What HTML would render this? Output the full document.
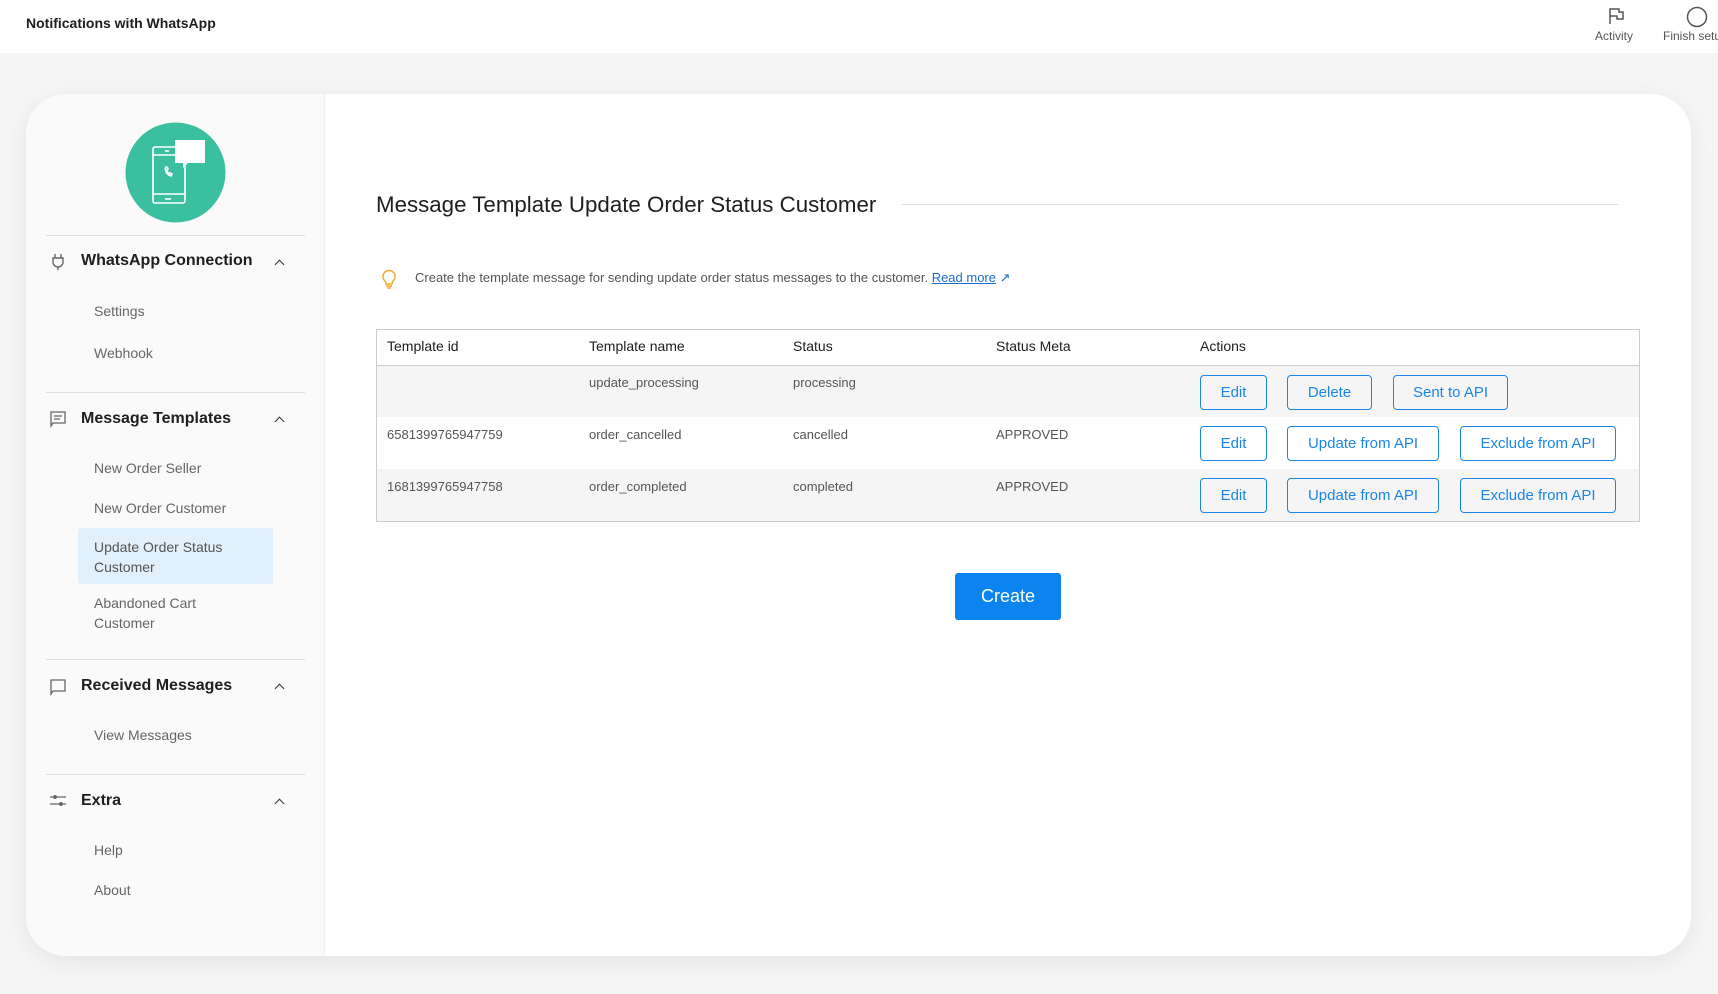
<!DOCTYPE html>
<html><head><style>
*{margin:0;padding:0;box-sizing:border-box}
body{width:1718px;height:994px;background:#f5f5f5;font-family:"Liberation Sans",sans-serif;position:relative;overflow:hidden;color:#1e1e1e}
.a{position:absolute;white-space:nowrap}
.hdr{position:absolute;left:0;top:0;width:1718px;height:53px;background:#fff}
.card{position:absolute;left:26px;top:94px;width:1665px;height:862px;background:#fff;border-radius:40px;box-shadow:0 6px 24px rgba(0,0,0,.07);overflow:hidden}
.side{position:absolute;left:0;top:0;width:299px;height:862px;background:#fafafa;border-right:1px solid #eee}
.div{position:absolute;left:46px;width:259px;height:1px;background:#ddd}
.sec{font-weight:bold;font-size:16px;color:#1e1e1e}
.it{font-size:14px;color:#666}
.chev{position:absolute;left:273px;width:7px;height:7px;border-left:1.6px solid #333;border-top:1.6px solid #333;transform:rotate(45deg)}
.th{font-size:14px;color:#1e1e1e}
.td{font-size:13px;color:#555}
.btn{position:absolute;border:1px solid #1a86e8;border-radius:4px;color:#1a86e8;font-size:15px;text-align:center;height:35px;line-height:33px;background:transparent}
</style></head><body>
<div class="hdr"></div>
<div class="a" style="left:26px;top:15px;font-size:14px;font-weight:bold">Notifications with WhatsApp</div>
<svg class="a" style="left:1607px;top:7px" width="18" height="18" viewBox="0 0 18 18" fill="none" stroke="#555" stroke-width="1.5"><path d="M3 17V2h9v3h4v7h-6V9H3"/></svg>
<div class="a" style="left:1595px;top:29px;font-size:12px;color:#555">Activity</div>
<svg class="a" style="left:1686px;top:6px" width="22" height="22"><circle cx="11" cy="11" r="9.5" fill="none" stroke="#555" stroke-width="1.5"/></svg>
<div class="a" style="left:1663px;top:29px;font-size:12px;color:#555">Finish setup</div>

<div class="card">
<div class="side">
<svg class="a" style="left:99px;top:28px" width="101" height="101" viewBox="0 0 101 101"><circle cx="50.5" cy="50.5" r="50" fill="#3bbfa1"/><g fill="none" stroke="#fff" stroke-width="1.6"><rect x="28" y="25" width="32" height="56" rx="2"/><line x1="28" y1="33" x2="50" y2="33"/><line x1="28" y1="72" x2="60" y2="72"/><line x1="40" y1="29" x2="44" y2="29"/><line x1="40" y1="77" x2="46" y2="77"/><path d="M41 45c-2 3 1 8 5 9l1-2-2-1-1 1c-1-1-2-2-2-4l1-1-1-2z"/></g><path d="M50 18h30v23H63l-5 5v-5h-8z" fill="#fff"/></svg>
<div class="div" style="top:141px;left:20px"></div>
<svg class="a" style="left:25px;top:159px" width="14" height="17" viewBox="0 0 14 17" fill="none" stroke="#666" stroke-width="1.4"><path d="M4 1v4M10 1v4M2 5h10v4a5 5 0 0 1-10 0zM7 14v3"/></svg>
<div class="a sec" style="left:55px;top:158px">WhatsApp Connection</div><div class="chev" style="top:167px;left:250px"></div>
<div class="a it" style="left:68px;top:209px">Settings</div>
<div class="a it" style="left:68px;top:251px">Webhook</div>
<div class="div" style="top:298px;left:20px"></div>
<svg class="a" style="left:23px;top:316px" width="18" height="18" viewBox="0 0 18 18" fill="none" stroke="#666" stroke-width="1.3"><path d="M2 2h14v11H4l-2 3z"/><path d="M5 6h8M5 9h6"/></svg>
<div class="a sec" style="left:55px;top:316px">Message Templates</div><div class="chev" style="top:324px;left:250px"></div>
<div class="a it" style="left:68px;top:366px">New Order Seller</div>
<div class="a it" style="left:68px;top:406px">New Order Customer</div>
<div class="a" style="left:52px;top:434px;width:195px;height:56px;background:#e1f0fa;border-radius:3px"></div>
<div class="a it" style="left:68px;top:443px;line-height:20px;color:#555">Update Order Status<br>Customer</div>
<div class="a it" style="left:68px;top:499px;line-height:20px">Abandoned Cart<br>Customer</div>
<div class="div" style="top:565px;left:20px"></div>
<svg class="a" style="left:23px;top:584px" width="18" height="18" viewBox="0 0 18 18" fill="none" stroke="#666" stroke-width="1.3"><path d="M2 2h14v11H4l-2 3z"/></svg>
<div class="a sec" style="left:55px;top:583px">Received Messages</div><div class="chev" style="top:591px;left:250px"></div>
<div class="a it" style="left:68px;top:633px">View Messages</div>
<div class="div" style="top:680px;left:20px"></div>
<svg class="a" style="left:23px;top:700px" width="18" height="14" viewBox="0 0 18 14" fill="none" stroke="#666" stroke-width="1.3"><path d="M1 3h16M1 10h16"/><circle cx="6" cy="3" r="1.3" fill="#666"/><circle cx="12" cy="10" r="1.3" fill="#666"/></svg>
<div class="a sec" style="left:55px;top:698px">Extra</div><div class="chev" style="top:706px;left:250px"></div>
<div class="a it" style="left:68px;top:748px">Help</div>
<div class="a it" style="left:68px;top:788px">About</div>
</div>

<div class="a" style="left:350px;top:98px;font-size:22.3px;color:#1e1e1e">Message Template Update Order Status Customer</div>
<div class="a" style="left:876px;top:110px;width:716px;height:1px;background:#ddd"></div>
<svg class="a" style="left:355px;top:175px" width="16" height="20" viewBox="0 0 16 20" fill="none" stroke="#f0a830" stroke-width="1.5"><path d="M4 12a6 6 0 1 1 8 0c-1 1-1 2-1 3H5c0-1 0-2-1-3z"/><path d="M5 17h6M6 19h4"/></svg>
<div class="a" style="left:389px;top:176px;font-size:13px;color:#555">Create the template message for sending update order status messages to the customer. <span style="color:#1a6fc8;text-decoration:underline">Read more</span> <span style="color:#1a6fc8">↗</span></div>

<div class="a" style="left:350px;top:235px;width:1264px;height:193px;border:1px solid #ccc"></div>
<div class="a" style="left:351px;top:271px;width:1262px;height:1px;background:#ccc"></div>
<div class="a" style="left:351px;top:272px;width:1262px;height:51px;background:#f5f5f5"></div>
<div class="a" style="left:351px;top:375px;width:1262px;height:52px;background:#f5f5f5"></div>
<div class="a th" style="left:361px;top:244px">Template id</div>
<div class="a th" style="left:563px;top:244px">Template name</div>
<div class="a th" style="left:767px;top:244px">Status</div>
<div class="a th" style="left:970px;top:244px">Status Meta</div>
<div class="a th" style="left:1174px;top:244px">Actions</div>
<div class="a td" style="left:563px;top:281px">update_processing</div>
<div class="a td" style="left:767px;top:281px">processing</div>
<div class="a td" style="left:361px;top:333px">6581399765947759</div>
<div class="a td" style="left:563px;top:333px">order_cancelled</div>
<div class="a td" style="left:767px;top:333px">cancelled</div>
<div class="a td" style="left:970px;top:333px">APPROVED</div>
<div class="a td" style="left:361px;top:385px">1681399765947758</div>
<div class="a td" style="left:563px;top:385px">order_completed</div>
<div class="a td" style="left:767px;top:385px">completed</div>
<div class="a td" style="left:970px;top:385px">APPROVED</div>

<div class="btn" style="left:1174px;top:281px;width:67px">Edit</div>
<div class="btn" style="left:1261px;top:281px;width:85px">Delete</div>
<div class="btn" style="left:1367px;top:281px;width:115px">Sent to API</div>
<div class="btn" style="left:1174px;top:332px;width:67px">Edit</div>
<div class="btn" style="left:1261px;top:332px;width:152px">Update from API</div>
<div class="btn" style="left:1434px;top:332px;width:156px">Exclude from API</div>
<div class="btn" style="left:1174px;top:384px;width:67px">Edit</div>
<div class="btn" style="left:1261px;top:384px;width:152px">Update from API</div>
<div class="btn" style="left:1434px;top:384px;width:156px">Exclude from API</div>

<div class="a" style="left:929px;top:479px;width:106px;height:47px;background:#0b84f0;border-radius:3px;color:#fff;font-size:18px;text-align:center;line-height:47px">Create</div>
</div>
</body></html>
